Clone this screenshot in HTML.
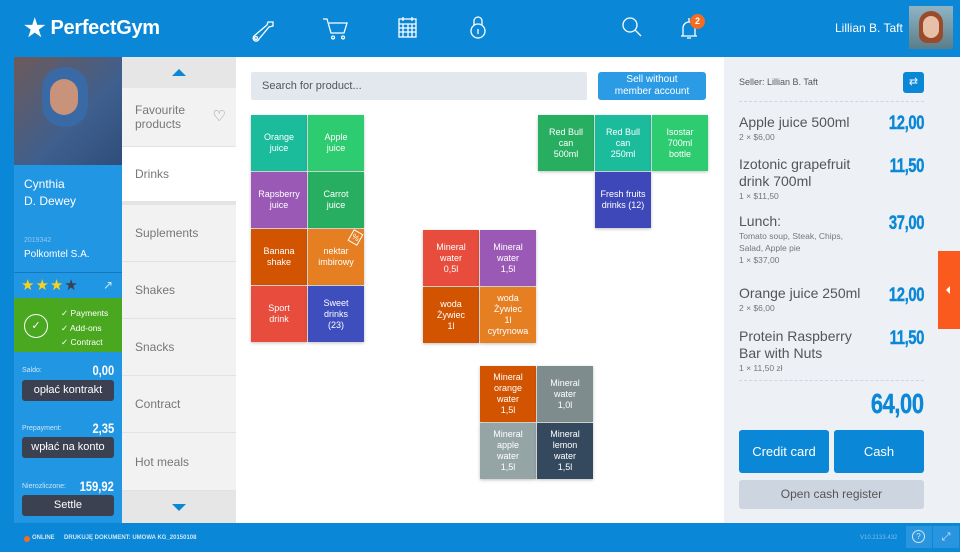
<!DOCTYPE html>
<html><head><meta charset="utf-8"><style>
*{box-sizing:border-box;margin:0;padding:0}
body{width:960px;height:552px;overflow:hidden;font-family:"Liberation Sans",sans-serif;background:#0a87d6;position:relative}
.a{position:absolute}
.t{position:absolute;width:56px;height:56px;color:#fff;font-size:9px;line-height:11px;display:flex;align-items:center;justify-content:center;text-align:center;box-shadow:0 1px 3px rgba(0,0,0,.25)}
.cat{position:absolute;left:122px;width:114px;background:#f2f2f2;border-bottom:1px solid #e2e2e2;color:#777;font-size:12px;padding-left:13px;display:flex;align-items:center}
.amt{font-family:"Liberation Sans",sans-serif;font-weight:900;color:#0a87d6;font-size:19px;letter-spacing:-.5px;transform:scaleX(.78);transform-origin:right top;-webkit-text-stroke:.4px #0a87d6}
.it{position:absolute;left:739px;color:#555;font-size:14px;line-height:17px}
.it small{display:block;font-size:8.5px;color:#777;line-height:12px}
.dk{position:absolute;left:22px;width:92px;height:21px;background:#3b4150;border-radius:3px;color:#fff;font-size:11px;text-align:center;line-height:21px}
.lb{position:absolute;left:22px;font-size:7px;color:#cfe6f7}
.lv{position:absolute;right:846px;font-weight:bold;color:#fff;font-size:14px;transform:scaleX(.8);transform-origin:right top}
</style></head><body>
<!-- header -->
<div class="a" style="left:24px;top:14px;color:#fff;font-size:20px;font-weight:bold;letter-spacing:-.3px"><span style="font-size:24px;vertical-align:-2px">★</span> PerfectGym</div>
<svg class="a" style="left:250px;top:14px" width="240" height="28" fill="none" stroke="#fff" stroke-width="1.3">
<path d="M4 22a3 3 0 1 0 5 3l10-12 4-1 0-4-5 0-1 3z"/><circle cx="6" cy="24" r="1.5"/>
<path d="M73 5h4l4 14h13l3-10H79M83 22a1.5 1.5 0 1 0 .1 0M93 22a1.5 1.5 0 1 0 .1 0"/>
<rect x="149" y="5" width="17" height="18"/><path d="M149 10h17M149 14h17M149 18h17M153 10v13M158 10v13M162 10v13M153 3v4M162 3v4"/>
<rect x="221" y="10" width="14" height="14" rx="7"/><path d="M224 11v-4a4 4 0 0 1 8 0v4M228 15v5"/>
</svg>
<svg class="a" style="left:620px;top:14px" width="80" height="28" fill="none" stroke="#fff" stroke-width="1.3">
<circle cx="10" cy="11" r="7"/><path d="M15 16l6 6"/>
<path d="M61 22h16M63 22v-8a6 6 0 0 1 12 0v8M69 4v4M67 24h4"/>
</svg>
<div class="a" style="left:690px;top:14px;width:15px;height:15px;border-radius:50%;background:#f36c21;color:#fff;font-size:9px;font-weight:bold;text-align:center;line-height:15px">2</div>
<div class="a" style="left:835px;top:21px;color:#fff;font-size:12px">Lillian B. Taft</div>
<div class="a" style="left:909px;top:6px;width:44px;height:43px;background:linear-gradient(#8fb5c5,#5a7d8a);"><div class="a" style="left:10px;top:5px;width:24px;height:32px;border-radius:12px 12px 8px 8px;background:#9c4b2a"></div><div class="a" style="left:14px;top:10px;width:16px;height:22px;border-radius:8px;background:#e8c0a8"></div></div>
<!-- left card -->
<div class="a" style="left:14px;top:57px;width:108px;height:108px;background:linear-gradient(135deg,#6d5a5a,#3e5f8e 60%,#2f4d7a)"><div class="a" style="left:28px;top:10px;width:46px;height:60px;border-radius:22px;background:#3a6aa5"></div><div class="a" style="left:36px;top:22px;width:28px;height:36px;border-radius:14px;background:#c9927a"></div></div>
<div class="a" style="left:14px;top:165px;width:108px;height:358px;background:#2196e3"></div>
<div class="a" style="left:24px;top:176px;color:#fff;font-size:12px;line-height:17px">Cynthia<br>D. Dewey</div>
<div class="a" style="left:24px;top:237px;color:#8fc8f0;font-size:7px">2019342</div>
<div class="a" style="left:24px;top:249px;color:#fff;font-size:10px">Polkomtel S.A.</div>
<div class="a" style="left:14px;top:272px;width:108px;height:1px;background:#1478c0"></div>
<div class="a" style="left:21px;top:276px;font-size:15px;color:#f7d31b;letter-spacing:1px">★★★<span style="color:#3b4150">★</span></div>
<div class="a" style="left:103px;top:278px;color:#cfe6f7;font-size:12px">↗</div>
<div class="a" style="left:14px;top:298px;width:108px;height:54px;background:#4aa820"></div>
<div class="a" style="left:24px;top:314px;width:24px;height:24px;border:1px solid #fff;border-radius:50%;color:#fff;font-size:11px;text-align:center;line-height:22px">✓</div>
<div class="a" style="left:61px;top:306px;color:#fff;font-size:8.5px;line-height:14.5px">✓ Payments<br>✓ Add-ons<br>✓ Contract</div>
<div class="lb" style="top:367px">Saldo:</div><div class="lv" style="top:362px">0,00</div>
<div class="dk" style="top:380px">opłać kontrakt</div>
<div class="lb" style="top:425px">Prepayment:</div><div class="lv" style="top:420px">2,35</div>
<div class="dk" style="top:437px">wpłać na konto</div>
<div class="lb" style="top:483px">Nierozliczone:</div><div class="lv" style="top:478px">159,92</div>
<div class="dk" style="top:495px">Settle</div>
<!-- categories -->
<div class="a" style="left:122px;top:57px;width:114px;height:31px;background:#e6e6e6"><div class="a" style="left:50px;top:12px;border:7px solid transparent;border-top:0;border-bottom:7px solid #0a87d6"></div></div>
<div class="cat" style="top:88px;height:59px;line-height:14px">Favourite<br>products<span style="position:absolute;right:10px;font-size:15px;color:#888">♡</span></div>
<div class="cat" style="top:147px;height:58px;background:#fff;border-bottom:4px solid #e4e4e4">Drinks</div>
<div class="cat" style="top:205px;height:57px">Suplements</div>
<div class="cat" style="top:262px;height:57px">Shakes</div>
<div class="cat" style="top:319px;height:57px">Snacks</div>
<div class="cat" style="top:376px;height:57px">Contract</div>
<div class="cat" style="top:433px;height:58px">Hot meals</div>
<div class="a" style="left:122px;top:491px;width:114px;height:32px;background:#e6e6e6"><div class="a" style="left:50px;top:13px;border:7px solid transparent;border-bottom:0;border-top:7px solid #0a87d6"></div></div>
<!-- main -->
<div class="a" style="left:236px;top:57px;width:488px;height:466px;background:#fff"></div>
<div class="a" style="left:251px;top:72px;width:336px;height:28px;background:#e3e8ee;border-radius:2px;color:#555;font-size:11px;line-height:28px;padding-left:11px">Search for product...</div>
<div class="a" style="left:598px;top:72px;width:108px;height:28px;background:#2c9be6;border-radius:3px;color:#fff;font-size:10px;line-height:12px;text-align:center;padding-top:2px">Sell without<br>member account</div>
<div class="t" style="left:251px;top:115px;background:#1abc9c">Orange<br>juice</div>
<div class="t" style="left:308px;top:115px;background:#2ecc71">Apple<br>juice</div>
<div class="t" style="left:251px;top:172px;background:#9b59b6">Rapsberry<br>juice</div>
<div class="t" style="left:308px;top:172px;background:#27ae60">Carrot<br>juice</div>
<div class="t" style="left:251px;top:229px;background:#d35400">Banana<br>shake</div>
<div class="t" style="left:308px;top:229px;background:#e67e22">nektar<br>imbirowy<span style="position:absolute;right:3px;top:2px;font-size:8px;transform:rotate(30deg);border:1px solid #fff;padding:0 1px">%</span></div>
<div class="t" style="left:251px;top:286px;background:#e74c3c">Sport<br>drink</div>
<div class="t" style="left:308px;top:286px;background:#3f4ebd">Sweet<br>drinks<br>(23)</div>
<div class="t" style="left:538px;top:115px;background:#27ae60">Red Bull<br>can<br>500ml</div>
<div class="t" style="left:595px;top:115px;background:#1abc9c">Red Bull<br>can<br>250ml</div>
<div class="t" style="left:652px;top:115px;background:#2ecc71">Isostar<br>700ml<br>bottle</div>
<div class="t" style="left:595px;top:172px;background:#3f48b8">Fresh fruits<br>drinks (12)</div>
<div class="t" style="left:423px;top:230px;background:#e74c3c">Mineral<br>water<br>0,5l</div>
<div class="t" style="left:480px;top:230px;background:#9b59b6">Mineral<br>water<br>1,5l</div>
<div class="t" style="left:423px;top:287px;background:#d35400">woda<br>Żywiec<br>1l</div>
<div class="t" style="left:480px;top:287px;background:#e67e22">woda<br>Żywiec<br>1l<br>cytrynowa</div>
<div class="t" style="left:480px;top:366px;background:#d35400">Mineral<br>orange<br>water<br>1,5l</div>
<div class="t" style="left:537px;top:366px;background:#7f8c8d">Mineral<br>water<br>1,0l</div>
<div class="t" style="left:480px;top:423px;background:#95a5a6">Mineral<br>apple<br>water<br>1,5l</div>
<div class="t" style="left:537px;top:423px;background:#34495e">Mineral<br>lemon<br>water<br>1,5l</div>
<!-- right -->
<div class="a" style="left:724px;top:57px;width:236px;height:466px;background:#edf1f6"></div>
<div class="a" style="left:739px;top:77px;font-size:9px;color:#555">Seller: Lillian B. Taft</div>
<div class="a" style="left:903px;top:72px;width:21px;height:21px;background:#0a87d6;border-radius:3px;color:#fff;font-size:11px;text-align:center;line-height:21px">⇄</div>
<div class="a" style="left:739px;top:101px;width:185px;border-top:1px dashed #cfd6de"></div>
<div class="it" style="top:114px">Apple juice 500ml<small>2 × $6,00</small></div><div class="a amt" style="right:36px;top:113px">12,00</div>
<div class="it" style="top:156px">Izotonic grapefruit<br>drink 700ml<small>1 × $11,50</small></div><div class="a amt" style="right:36px;top:156px">11,50</div>
<div class="it" style="top:213px">Lunch:<small>Tomato soup, Steak, Chips,<br>Salad, Apple pie<br>1 × $37,00</small></div><div class="a amt" style="right:36px;top:213px">37,00</div>
<div class="it" style="top:285px">Orange juice 250ml<small>2 × $6,00</small></div><div class="a amt" style="right:36px;top:285px">12,00</div>
<div class="it" style="top:328px">Protein Raspberry<br>Bar with Nuts<small>1 × 11,50 zł</small></div><div class="a amt" style="right:36px;top:328px">11,50</div>
<div class="a" style="left:739px;top:380px;width:185px;border-top:1px dashed #cfd6de"></div>
<div class="a amt" style="right:36px;top:388px;font-size:28px">64,00</div>
<div class="a" style="left:739px;top:430px;width:90px;height:43px;background:#0a87d6;border-radius:3px;color:#fff;font-size:13px;text-align:center;line-height:43px">Credit card</div>
<div class="a" style="left:834px;top:430px;width:90px;height:43px;background:#0a87d6;border-radius:3px;color:#fff;font-size:13px;text-align:center;line-height:43px">Cash</div>
<div class="a" style="left:739px;top:480px;width:185px;height:29px;background:#cdd6e0;border-radius:3px;color:#555;font-size:12px;text-align:center;line-height:29px">Open cash register</div>
<div class="a" style="left:938px;top:251px;width:22px;height:78px;background:#fa5a1e"><div class="a" style="left:8px;top:35px;border:4px solid transparent;border-left:0;border-right:4px solid #fff"></div></div>
<!-- footer -->
<div class="a" style="left:24px;top:536px;width:6px;height:6px;border-radius:50%;background:#f36c21"></div>
<div class="a" style="left:32px;top:535px;color:#cfe6f7;font-size:6px;font-weight:bold">ONLINE</div>
<div class="a" style="left:64px;top:535px;color:#cfe6f7;font-size:6px;font-weight:bold">DRUKUJĘ DOKUMENT: UMOWA KG_20150108</div>
<div class="a" style="left:860px;top:535px;color:#7fbde9;font-size:6px">V10.2133.432</div>
<div class="a" style="left:906px;top:526px;width:26px;height:22px;background:#2a95df"><div class="a" style="left:6px;top:4px;width:13px;height:13px;border:1px solid #cfe6f7;border-radius:50%;color:#cfe6f7;font-size:8px;text-align:center;line-height:11px">?</div></div>
<div class="a" style="left:933px;top:526px;width:26px;height:22px;background:#2a95df;color:#cfe6f7;font-size:11px;text-align:center;line-height:22px">⤢</div>
</body></html>
